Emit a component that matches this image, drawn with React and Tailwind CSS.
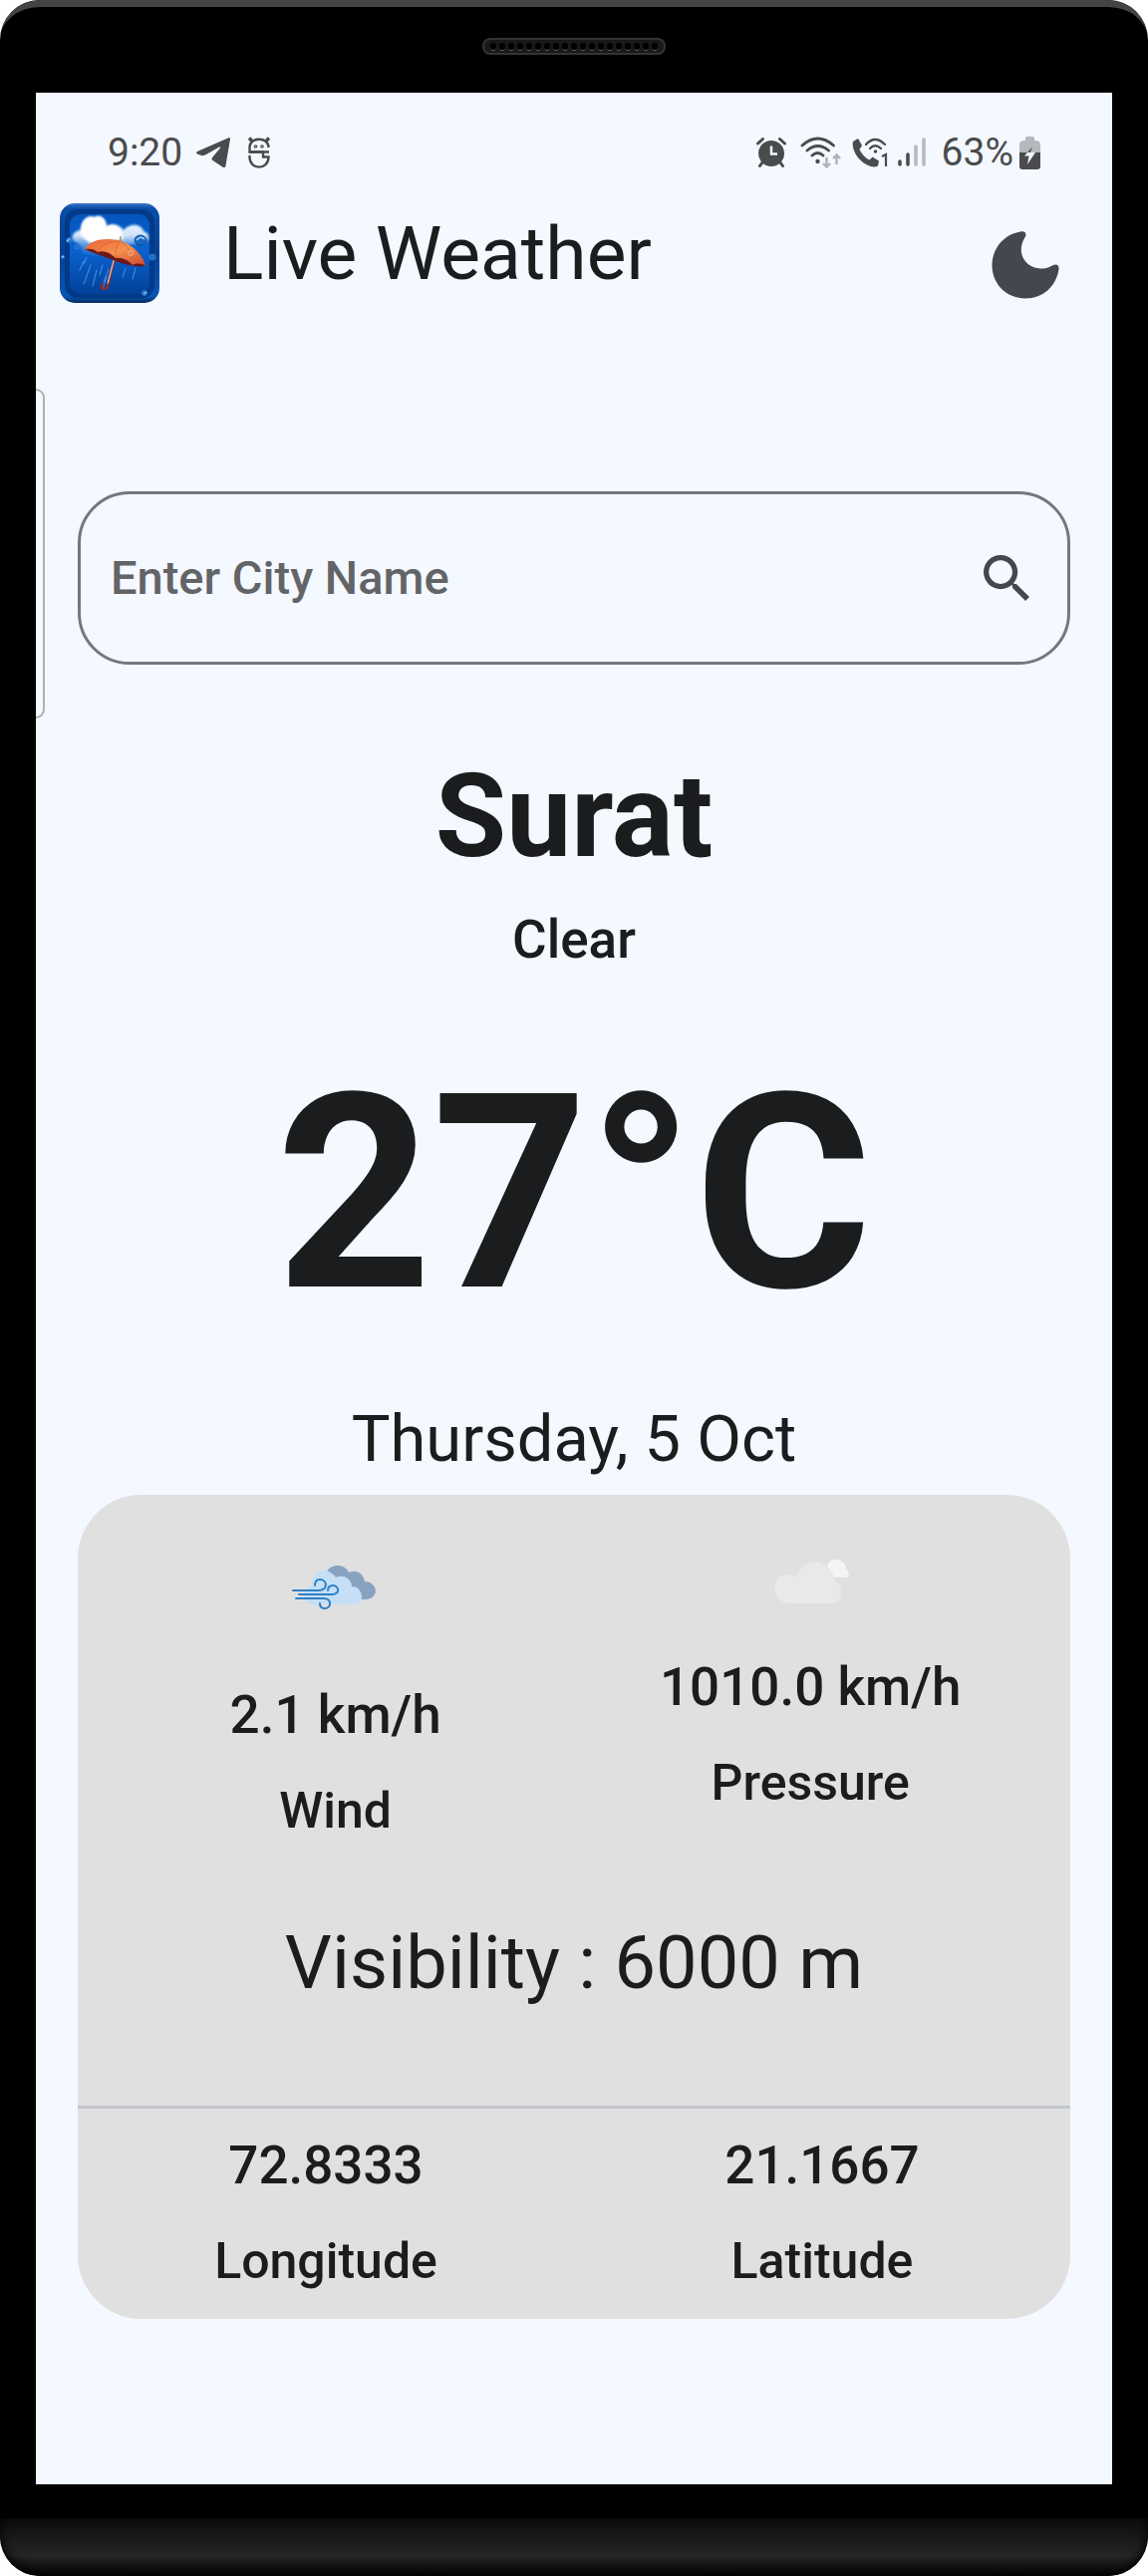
function AppLogo() {
  return (
    <svg viewBox="0 0 100 100" className="size-25 shrink-0" role="img" aria-label="Live Weather logo">
      <defs>
        <linearGradient id="rim" x1="0" y1="0" x2="0" y2="1">
          <stop offset="0" stopColor="#3a78c8" />
          <stop offset="0.05" stopColor="#0a4ea6" />
          <stop offset="0.5" stopColor="#034093" />
          <stop offset="0.93" stopColor="#0756b4" />
          <stop offset="1" stopColor="#02295f" />
        </linearGradient>
        <linearGradient id="sky" x1="0" y1="0" x2="0" y2="1">
          <stop offset="0" stopColor="#0455bd" />
          <stop offset="0.45" stopColor="#0a62cf" />
          <stop offset="1" stopColor="#02419a" />
        </linearGradient>
        <linearGradient id="cloudFill" x1="0" y1="0" x2="0" y2="1">
          <stop offset="0" stopColor="#ffffff" />
          <stop offset="0.5" stopColor="#cfe3fa" />
          <stop offset="1" stopColor="#3d86dc" stopOpacity="0.2" />
        </linearGradient>
        <linearGradient id="canopy" x1="0" y1="0" x2="1" y2="1">
          <stop offset="0" stopColor="#e8603a" />
          <stop offset="0.5" stopColor="#f5914e" />
          <stop offset="1" stopColor="#cf4630" />
        </linearGradient>
        <filter id="soft"><feGaussianBlur stdDeviation="1" /></filter>
      </defs>
      <rect width="100" height="100" rx="15" fill="url(#rim)" />
      <rect x="5" y="6" width="90" height="89" rx="13" fill="#023a88" />
      <rect x="10" y="11" width="80" height="80" rx="11" fill="url(#sky)" />
      <path d="M14 38C10 34 15 26 22 27C21 17 28 11 35 14C40 10 47 16 47 23C53 19 61 22 64 27C71 19 82 21 84 28C92 31 90 39 84 40L66 42C52 50 30 56 24 50C20 46 24 42 14 38Z" fill="url(#cloudFill)" filter="url(#soft)" />
      <path d="M21 32C19 18 29 12 35 15C41 12 46 17 46 24C53 20 60 23 62 29L64 36L30 40Z" fill="#ffffff" filter="url(#soft)" />
      <g stroke="#5aa5f0" strokeWidth="1" strokeLinecap="round" opacity="0.8">
        <path d="M24 58l-4 9M31 62l-7 19M37 67l-4 16M43 62l-3 10M49 66l-5 13M66 65l-3 9M76 65l-3 11M47 74l-4 12M27 54l-3 7" />
      </g>
      <path d="M61 33V38" stroke="#c08a5a" strokeWidth="1.500" />
      <path d="M56 51L48.500 81C47.500 88 41 87 42 81" fill="none" stroke="#8f2c28" strokeWidth="2.500" strokeLinecap="round" />
      <path d="M55.500 52L48 80.500" stroke="#f3c3b5" strokeWidth="1.200" />
      <path d="M25 46C31 36 47 34 61 38C75 42 84 54 86 63C80 60 76 61 73 62C68 57 61 56 56 56C51 50 43 48 38 49C33 46 29 46 25 46Z" fill="url(#canopy)" />
      <path d="M25 46C31 45 35 46 38 49C44 47 51 50 56 55C62 54 69 57 73 62C77 60 82 60 86 63C76 64 66 62 56 58C44 53 33 50 25 46Z" fill="#6d1817" />
      <path d="M61 38C49 38 41 42 38 48M61 38C56 42 56 49 56 55M61 38C70 44 73 53 73 61" fill="none" stroke="#d9602f" strokeWidth="0.700" />
      <ellipse cx="81" cy="37" rx="6" ry="5" fill="#1769c4" stroke="#0c448e" strokeWidth="0.800" />
      <path d="M77 37q4-5 8-1" fill="none" stroke="#a6d6ff" strokeWidth="1.500" />
      <g fill="#1a6dc9" stroke="#3f8ad8" strokeWidth="0.700">
        <circle cx="93" cy="54" r="3" />
        <circle cx="17" cy="44" r="2" />
        <circle cx="9" cy="37" r="2.500" />
        <circle cx="3" cy="54" r="1.500" />
        <circle cx="85" cy="90" r="2.500" />
      </g>
      <path d="M84 91l3-2M2 54l2-1M7 38l3-2" stroke="#d6ecff" strokeWidth="1" />
      <circle cx="71" cy="50" r="2.500" fill="#ef8050" stroke="#ffd0a8" strokeWidth="0.600" />
    </svg>
  );
}

function NotificationIcons() {
  return (
    <>
      <svg viewBox="0 0 34 30" className="ml-3.5 h-[30px] w-[34px]" fill="#4a4b4d" aria-hidden="true">
        <path d="M33 0Q34 0 34 1.500L29.500 28Q29 31 27 30L16.500 23Q14.500 21.500 16.500 19.500L24 10.500Q24.500 9 23 9.500L10 17Q7.500 18.500 5 18L1 16.500Q-1 15.500 1 14Z" />
      </svg>
      <svg viewBox="0 0 22 32" className="ml-[18px] h-[32px] w-[22px]" fill="none" stroke="#4a4b4d" strokeWidth="2.400" aria-hidden="true">
        <path d="M21 15.500H1.500V11C1.500 0 20.500 0 20.500 11" />
        <path d="M1.500 15.500H15V20.500H20.500C20.500 34 1.500 34 1.500 20.500V19" />
        <path d="M4 4.500L1 1.500M18 4.500L21 1.500" strokeWidth="3.500" />
        <circle cx="7.500" cy="10" r="0.600" /><circle cx="14" cy="10" r="0.600" />
      </svg>
    </>
  );
}

function SystemIcons() {
  return (
    <>
      <svg viewBox="0 0 30 30" className="h-[30px] w-[30px]" fill="#4a4b4d" aria-hidden="true">
        <circle cx="15" cy="16" r="13" />
        <path d="M1.500 6L6.500 1.500M28.500 6L23.500 1.500M6 25L3.500 28.500M24 25L26.500 28.500" stroke="#4a4b4d" strokeWidth="3" strokeLinecap="round" />
        <path d="M15 8.500V16.500H21" fill="none" stroke="#f4f8ff" strokeWidth="2.500" />
      </svg>
      <svg viewBox="0 0 42 32" className="ml-3.5 h-[32px] w-[42px]" fill="none" strokeLinecap="round" aria-hidden="true">
        <g stroke="#4a4b4d" strokeWidth="2.800">
          <path d="M2 9Q17.500-5 33.500 9M7 14Q17.500 5 28.500 14M12 19Q17.500 14 23 19" />
        </g>
        <circle cx="17.500" cy="25" r="2.200" fill="#4a4b4d" />
        <path d="M26.500 21V30M23 27L26.500 30.500L30 27M36.500 28V19M33 22L36.500 18.500L40 22" stroke="#aeb1b5" strokeWidth="2.400" strokeLinecap="butt" />
      </svg>
      <svg viewBox="0 0 36 30" className="ml-2.5 h-[30px] w-[36px]" fill="#4a4b4d" aria-hidden="true">
        <path d="M1 4L6 1L10 8L7.500 12Q11 19.500 17.500 22.500L20.500 19.500L27 23.500L26 28.500Q22 31 15 27.500Q5 22 2 13Q0 8 1 4Z" />
        <path d="M14 7Q23-3 33 7M18 11Q23 5.500 29 11" fill="none" stroke="#4a4b4d" strokeWidth="2.300" strokeLinecap="round" />
        <circle cx="23.500" cy="14" r="1.800" />
        <path d="M30 19L34 17V29" fill="none" stroke="#4a4b4d" strokeWidth="2.200" />
      </svg>
      <svg viewBox="0 0 28 30" className="ml-2.5 h-[30px] w-[28px]" fill="none" strokeWidth="3.500" strokeLinecap="round" aria-hidden="true">
        <path d="M2 24V27M10 17V27" stroke="#4a4b4d" />
        <path d="M18 9V27M26 2V27" stroke="#b5b8bd" />
      </svg>
    </>
  );
}

function Battery() {
  return (
    <svg viewBox="0 0 21 33" className="ml-1.5 h-[33px] w-[21px]" aria-hidden="true">
      <path d="M6 4V2Q6 0 8 0H13Q15 0 15 2V4Q21 4 21 8V17H0V8Q0 4 6 4Z" fill="#b5b8bd" />
      <path d="M0 16H21V30Q21 33 18 33H3Q0 33 0 30Z" fill="#4a4b4d" />
      <path d="M13 10L5 19.500H9.500L8 28L16 16H11Z" fill="#f4f8ff" />
      <path d="M13 10L8 16H11Z" fill="#4a4b4d" />
    </svg>
  );
}

function WindCloud() {
  return (
    <svg viewBox="0 0 84 46" className="h-[46px] w-[84px]" aria-hidden="true">
      <path d="M35 6C40-2 53-2 57 7C65 3 72 9 73 16C80 16 84 21 84 26C83 31 79 34 74 34H50Z" fill="#87a3c0" />
      <path d="M22 39C8 39 9 21 20 20C18 4 36 0 44 12C52 8 60 14 60 21C66 21 70 26 70 31C70 36 66 39 61 39Z" fill="#c5dff7" />
      <g fill="none" stroke="#2f80c3" strokeWidth="2" strokeLinecap="round">
        <path d="M1 25H27C37 24 35 14 28 14C24 14 23 17 23 20" />
        <path d="M7 29H40C49 29 47 20 41 20C37 20 36 23 36 25" />
        <path d="M4 33H32C40 33 40 43 33 43C29 43 28 40 28 38" />
      </g>
    </svg>
  );
}

function PaleCloud() {
  return (
    <svg viewBox="0 0 76 46" className="h-[46px] w-[76px]" aria-hidden="true">
      <path d="M53 7C55-1 71-2 72 10C75 13 76 17 73 19H60Z" fill="#f4f4f4" />
      <path d="M14 45C-5 43-4 14 16 16C18 16 20 17 22 18C27-1 56-2 61 22C71 28 68 45 58 45Z" fill="#e9e9e9" />
    </svg>
  );
}

function Metric({ icon, value, label, className = "" }) {
  return (
    <div className={"flex flex-col items-center font-medium " + className}>
      {icon}
      <span className="text-[53px] leading-16">{value}</span>
      <span className="mt-8 text-[50px] leading-16">{label}</span>
    </div>
  );
}

export default function App() {
  return (
    <div className="flex min-h-screen flex-col overflow-hidden rounded-[40px] bg-black font-[Roboto,sans-serif] text-[#1b1c1e]">
      <div className="flex h-[93px] flex-col items-center rounded-t-[40px] border-t-7 border-[#444446] pt-[31px]">
        <div className="flex h-[17px] w-[184px] items-center justify-around rounded-lg border-2 border-[#333333] bg-[#181818] px-1">
          {Array.from({ length: 19 }, (_, i) => (
            <span key={i} className="h-2 w-[6px] rounded-full border-b border-[#666666] bg-black" />
          ))}
        </div>
      </div>

      <main className="relative mx-9 flex flex-1 flex-col bg-[#f4f8ff]">
        <div className="absolute top-[297px] left-0 h-[331px] w-[9px] rounded-r-xl border-2 border-l-0 border-[#aeb0b2] bg-[#f7fafd]" />

        <div className="flex items-center pt-9 pr-[72px] pl-[72px] text-[39px] leading-12 text-[#4a4b4d]">
          <span>9:20</span>
          <NotificationIcons />
          <div className="ml-auto flex items-center">
            <SystemIcons />
            <span className="ml-4">63%</span>
            <Battery />
          </div>
        </div>

        <header className="mt-[27px] flex h-25 items-center pr-[53px] pl-6">
          <AppLogo />
          <h1 className="ml-16 text-[75px] leading-25">Live Weather</h1>
          <button type="button" aria-label="Toggle dark mode" className="mt-6 ml-auto">
            <svg viewBox="0 0 68 68" className="size-[68px]" fill="#44474f" aria-hidden="true">
              <path d="M29 0.500C34-0.500 36 3 33 7C24 23 35 37 49 37.500C55 38 58 36 61 34.500C65 32 68 34 67.500 38C65 55 52 67.500 34 67.500C15 67.500 0.500 53 0.500 34C0.500 18 12 3 29 0.500Z" />
            </svg>
          </button>
        </header>

        <form onSubmit={(e) => e.preventDefault()} className="mx-[42px] mt-[189px] flex h-[174px] items-center rounded-[52px] border-[3px] border-[#74777f] pr-[38px] pl-[30px]">
          <input
            type="text"
            aria-label="City name"
            placeholder="Enter City Name"
            className="min-w-0 flex-1 bg-transparent text-[47px] leading-16 font-medium outline-none placeholder:text-[#636466]"
          />
          <button type="submit" aria-label="Search">
            <svg viewBox="3 3 17.500 17.500" className="size-[46px]" fill="#44474f" aria-hidden="true">
              <path d="M15.500 14h-.79l-.28-.27A6.471 6.471 0 0 0 16 9.500 6.500 6.500 0 1 0 9.500 16c1.610 0 3.090-.59 4.230-1.570l.27.28v.79l5 4.990L20.490 19l-4.990-5zm-6 0C7.010 14 5 11.990 5 9.500S7.010 5 9.500 5 14 7.010 14 9.500 11.990 14 9.500 14z" />
            </svg>
          </button>
        </form>

        <section className="mt-[86px] flex flex-col items-center">
          <h2 className="text-[116px] leading-[132px] font-bold">Surat</h2>
          <p className="mt-[26px] text-[53px] leading-16 font-medium">Clear</p>
          <p className="mt-[59px] text-[273px] leading-[328px] font-bold">27°C</p>
          <p className="mt-11 text-[65px] leading-[76px]">Thursday, 5 Oct</p>
        </section>

        <section className="mx-[42px] mt-[18px] mb-[166px] rounded-[64px] bg-[#e0e0e0]">
          <div className="flex items-start justify-around pt-16">
            <Metric icon={<span className="mt-[7px] mr-1 mb-[72px]"><WindCloud /></span>} value="2.1 km/h" label="Wind" className="pl-[43px]" />
            <Metric icon={<span className="mb-[51px] ml-1"><PaleCloud /></span>} value="1010.0 km/h" label="Pressure" />
          </div>
          <p className="mt-[78px] text-center text-[74px] leading-[86px]">Visibility : 6000 m</p>
          <hr className="mt-[100px] border-t-3 border-[#c3c7cf]" />
          <div className="grid grid-cols-2 pt-[25px] pb-[26px]">
            <Metric value="72.8333" label="Longitude" />
            <Metric value="21.1667" label="Latitude" />
          </div>
        </section>
      </main>

      <footer className="mt-[34px] h-[58px] rounded-b-[40px] bg-linear-to-b from-[#0c0c0c] via-[#262626] via-65% to-[#080808] shadow-[inset_0_-3px_12px_#000000]" />
    </div>
  );
}
